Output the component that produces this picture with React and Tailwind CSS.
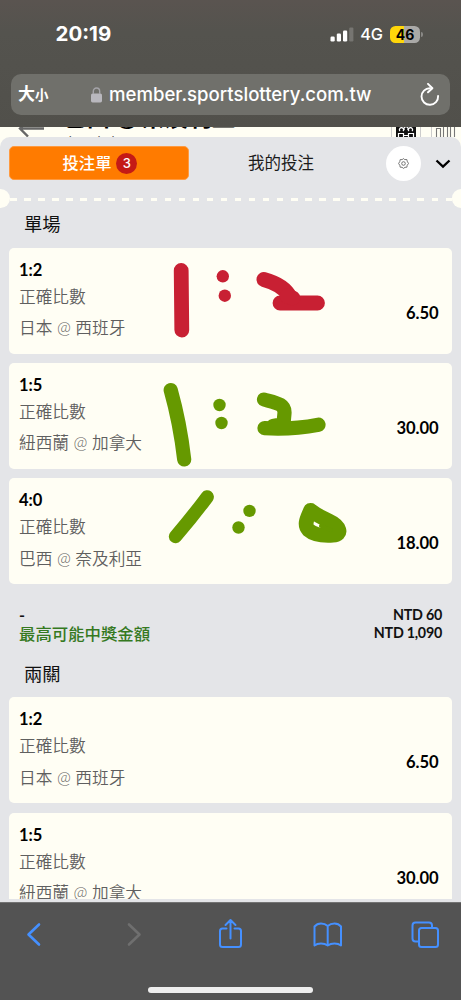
import React from 'react';

const single = [
  { score: '1:2', match: '日本 @ 西班牙', odds: '6.50', mark: 'first' },
  { score: '1:5', match: '紐西蘭 @ 加拿大', odds: '30.00', mark: 'second' },
  { score: '4:0', match: '巴西 @ 奈及利亞', odds: '18.00', mark: 'third' },
];

const double = [
  { score: '1:2', match: '日本 @ 西班牙', odds: '6.50' },
  { score: '1:5', match: '紐西蘭 @ 加拿大', odds: '30.00' },
];

const App = () => {
  return (
    <div className="flex flex-col w-[461px] h-[1000px] overflow-hidden bg-[#e4e5e8] text-black font-['Lato','Noto_Sans_CJK_TC',sans-serif]">
      <TopBar />
      <main className="flex-1 min-h-0 overflow-hidden bg-[#fffef4]">
        <PageHeader />
        <section className="relative bg-[#e4e5e8] rounded-t-[10px]">
          <Tabs />
          <Divider />
          <SectionTitle>單場</SectionTitle>
          <div className="flex flex-col gap-[9.4px] pl-[9px] pr-[9.5px]">
            {single.map((b) => <BetCard key={b.score} {...b} />)}
          </div>
          <Totals />
          <SectionTitle>兩關</SectionTitle>
          <div className="flex flex-col gap-[9.4px] pl-[9px] pr-[9.5px]">
            {double.map((b) => <BetCard key={b.score} {...b} />)}
          </div>
        </section>
      </main>
      <div className="h-[3px] shrink-0 bg-[#e4e5e8]" />
      <BottomBar />
    </div>
  );
};

const TopBar = () => (
  <header className="h-[127px] shrink-0 bg-linear-to-b from-[#5a5450] via-[#54534e] via-25% to-[#51504b] text-white font-['Inter','Noto_Sans_CJK_TC',sans-serif]">
    <div className="flex items-center justify-between h-[74px] pl-[55.5px] pr-[38px]">
      <span className="text-[20.5px] leading-none font-bold -mt-[5px]">20:19</span>
      <div className="flex items-center -mt-[5px]">
        <svg width="24" height="16" viewBox="0 0 24 16" fill="#fff">
          <rect x="0.5" y="9.5" width="4.2" height="5" rx="1.2" />
          <rect x="6.8" y="6.5" width="4.2" height="8" rx="1.2" />
          <rect x="13" y="3.5" width="4.2" height="11" rx="1.2" />
          <rect x="19.2" y="0.5" width="4.2" height="14" rx="1.2" opacity="0.2" />
        </svg>
        <span className="ml-[6px] text-[16.3px] leading-none font-medium">4G</span>
        <div className="ml-[7px] w-[30px] h-[17px] rounded-[5.5px] bg-linear-to-r from-[#ffd60a] from-47% to-[#aaa9a7] to-47% flex items-center justify-center text-black text-[14px] leading-none font-bold">46</div>
        <div className="ml-[1px] w-[2px] h-[5px] rounded-r bg-[#8a8986]" />
      </div>
    </div>
    <div className="mx-[11px] h-[41px] rounded-[10px] bg-[#70706b] flex items-center">
      <div className="flex items-baseline w-[80px] pl-[7px] leading-none font-bold">
        <span className="text-[17px]">大</span>
        <span className="text-[13.5px]">小</span>
      </div>
      <svg className="shrink-0" width="11" height="16" viewBox="0 0 11 16">
        <rect x="0" y="6.6" width="11" height="8.8" rx="1.6" fill="#b9b8be" />
        <path d="M2.3 7V4.2a3.2 3.2 0 0 1 6.4 0V7" fill="none" stroke="#a5a4a9" strokeWidth="1.4" />
      </svg>
      <span className="ml-[7px] w-[266px] text-[18.6px] leading-none font-medium whitespace-nowrap">member.sportslottery.com.tw</span>
      <svg className="ml-[44px]" width="22" height="24" viewBox="0 0 22 24" fill="none" stroke="#fff" strokeWidth="1.9" strokeLinecap="round" strokeLinejoin="round">
        <path d="M11 5.2a8.3 8.3 0 1 0 8.1 7.8" />
        <path d="M9 .9l4.400 4.300L9 9.300" />
      </svg>
    </div>
  </header>
);

// Event header, mostly hidden between the browser bar and the bet slip
const PageHeader = () => (
  <div className="relative h-[10px] overflow-hidden">
    <svg className="absolute left-[18px] -top-[10px]" width="27" height="21" viewBox="0 0 27 21" fill="none" stroke="#666" strokeWidth="2.4">
      <path d="M26 11.5H2M10 3.5L2 11.5L10 19.5" />
    </svg>
    <div className="absolute left-[63px] -top-[23px] text-[23.500px] leading-[26px] font-bold whitespace-nowrap">巴西 @ 奈及利亞</div>
    <div className="absolute left-[64px] top-[6px] text-[14px] leading-[20px] text-[#444] whitespace-nowrap">女足賽賽</div>
    <div className="absolute left-[391px] -top-2 w-[30px] h-8 border border-[#ccc] flex justify-center">
      <svg width="20" height="18" viewBox="0 0 20 18">
        <rect width="20" height="18" fill="#111" />
        <path d="M2.500 17v-3.500h5V17M12.500 17v-3.500h5V17M7.500 15.500h5M4 11a2 2 0 1 1 3 0M8.500 10a2 2 0 1 1 3 0M13 11a2 2 0 1 1 3 0" fill="none" stroke="#fff" strokeWidth="1.2" />
      </svg>
    </div>
    <div className="absolute left-[431px] -top-2 w-[31px] h-8 border border-[#ccc]">
      <svg width="28" height="24" viewBox="0 0 28 24" fill="none" stroke="#777" strokeWidth="1.1">
        <path d="M4.5 22V8.5h4V22M11.5 22V6.5h4V22M18.5 22V4.5h4V22" />
      </svg>
    </div>
  </div>
);

const Tabs = () => (
  <div className="flex items-center h-[52px] pl-[9px] pr-[10px]">
    <button className="w-[180px] h-[33.5px] rounded-[5px] border border-[#ff9a40] bg-[#ff7b00] flex items-center justify-center gap-[5px] pl-[2px] text-white text-[16.3px] font-medium">
      <span className="leading-none">投注單</span>
      <span className="w-[21px] h-[21px] rounded-full bg-[#c41a16] flex items-center justify-center text-[13px] leading-none font-['Inter',sans-serif]">3</span>
    </button>
    <button className="ml-[59px] w-[138px] text-left text-[16.5px] leading-none text-[#1b1b1b]">我的投注</button>
    <div className="w-[35px] h-[35px] rounded-full bg-white flex items-center justify-center">
      <svg width="11" height="11" viewBox="0 0 11 11" fill="none" stroke="#555" strokeWidth="0.8">
        <path d="M5.5 .6L6.7 1.6L8.8 1.5L9.2 3.2L10.5 5.5L9.2 7.3L8.9 9.2L7 9.3L5.5 10.4L4.1 9.3L2.2 9.2L1.8 7.3L.6 5.5L1.8 3.5L2.2 1.6L4.2 1.6Z" />
        <circle cx="5.5" cy="5.5" r="1.8" />
      </svg>
    </div>
    <svg className="ml-[14px] mt-[2px]" width="16" height="10" viewBox="0 0 16 10" fill="none" stroke="#000" strokeWidth="2.3">
      <path d="M1.5 1.5L8 7.7L14.5 1.5" />
    </svg>
  </div>
);

const Divider = () => (
  <div className="h-[19px] overflow-hidden flex items-center justify-between">
    <div className="w-[9.5px] h-[19px] rounded-r-full bg-[#fffef4]" />
    <div className="flex-1 h-[3px] mt-[2px] bg-[repeating-linear-gradient(90deg,#fffef4_0_6.5px,transparent_6.5px_14.05px)]" />
    <div className="w-[9.5px] h-[19px] rounded-l-full bg-[#fffef4]" />
  </div>
);

const SectionTitle = ({ children }) => (
  <h2 className="h-[39.5px] pl-[24px] pt-[6px] text-[18.3px] leading-[20px] text-[#111]">{children}</h2>
);

const BetCard = ({ score, match, odds, mark }) => (
  <div className="relative h-[106px] rounded-[5px] bg-[#fffef4] pl-[10px] pr-[13px] pt-[12px] flex justify-between">
    <div>
      <p className="text-[16.5px] leading-[20px] font-bold">{score}</p>
      <p className="mt-[6px] text-[16.7px] leading-[22px] font-[350] text-[#5f5f5f]">正確比數</p>
      <p className="mt-[9.5px] text-[16.7px] leading-[22px] font-[350] text-[#5f5f5f]">{match}</p>
    </div>
    <p className="mt-[43px] text-[16.6px] leading-[20px] font-bold tracking-[-0.1px]">{odds}</p>
    {mark && <Marker mark={mark} />}
  </div>
);

// Hand-drawn final scores over the slip
const Marker = ({ mark }) => (
  <svg className="absolute left-0 top-0 blur-[0.6px]" width="442" height="106" viewBox="0 0 442 106" fill="none" strokeLinecap="round" strokeLinejoin="round">
    {mark === 'first' && (
      <g stroke="#c82033" strokeWidth="14.8">
        <path d="M172.2 22.5L172.8 82" />
        <path d="M254.8 31.5Q275 37 281 49M271 55H308.500" />
        <path d="M278 48L284 50" />
        <circle cx="213.8" cy="28.3" r="6.2" fill="#c82033" stroke="none" />
        <circle cx="215.8" cy="47.7" r="6.2" fill="#c82033" stroke="none" />
      </g>
    )}
    {mark === 'second' && (
      <g stroke="#669900" strokeWidth="14.2">
        <path d="M161.7 27Q171 60 175.2 96.5" />
        <path d="M255 36.5C268 40 276 41 275.5 50L274.500 61L264 63M255.5 65.2Q282 67 309.5 61.7" />
        <circle cx="210.5" cy="42" r="6.2" fill="#669900" stroke="none" />
        <circle cx="212.5" cy="60" r="6.2" fill="#669900" stroke="none" />
      </g>
    )}
    {mark === 'third' && (
      <g stroke="#669900" strokeWidth="13.4">
        <path d="M198.2 18.9Q184 38 166.5 58.5" />
        <path d="M301.5 32.2Q309 38 320 43C331 48 334 57 324 57.2C312 58 304 56 299.5 52C294 46 299 39 301.5 32.2Z" strokeWidth="14.600" />
        <path d="M312 48L322 52" strokeWidth="4" />
        <circle cx="240.5" cy="32.9" r="6.2" fill="#669900" stroke="none" />
        <circle cx="229.5" cy="49.5" r="6.2" fill="#669900" stroke="none" />
      </g>
    )}
  </svg>
);

const Totals = () => (
  <div className="flex justify-between h-[73.500px] pl-[19px] pr-[19px] pt-[21.500px] font-bold text-[#111]">
    <div>
      <p className="text-[16px] leading-[18px]">-</p>
      <p className="text-[16.4px] leading-[20px] font-medium text-[#35791f]">最高可能中獎金額</p>
    </div>
    <div className="text-right text-[14.3px] leading-[18.7px] tracking-[-0.25px]">
      <p>NTD 60</p>
      <p>NTD 1,090</p>
    </div>
  </div>
);

const BottomBar = () => (
  <footer className="h-[98px] shrink-0 border-t border-[#737373] bg-[#535353]">
    <svg width="461" height="62" viewBox="0 0 461 62" fill="none" stroke="#4590ff" strokeWidth="2" strokeLinecap="round" strokeLinejoin="round">
      <path d="M39 21.5L28.5 31.5L39 41.5" strokeWidth="2.6" />
      <path d="M129 21.5L139.5 31.5L129 41.5" stroke="#6f6f6f" strokeWidth="2.6" />
      <path d="M226.5 25.5H222.5Q220 25.5 220 28V41.5Q220 44 222.5 44H238.5Q241 44 241 41.5V28Q241 25.5 238.5 25.5H234.5M230.5 35.5V17M225.5 22L230.5 17L235.5 22" />
      <path d="M327.7 23Q325 20.5 321 20.5T314.5 23.5V42.5Q317 40.5 321 40.5T327.7 42.5Q330.5 40.5 334.5 40.5T341 42.5V23.5Q338.5 20.5 334.5 20.5T327.7 23V42.5" />
      <rect x="419" y="25" width="19" height="19" rx="2.5" />
      <path d="M418.5 38.5H415.5Q412.5 38.5 412.5 35.5V22.5Q412.5 19.5 415.5 19.5H429Q432 19.5 432 22.5V24.5" />
    </svg>
    <div className="mx-auto mt-[22px] w-[165px] h-[5.5px] rounded-full bg-[#eee]" />
  </footer>
);

export default App;
